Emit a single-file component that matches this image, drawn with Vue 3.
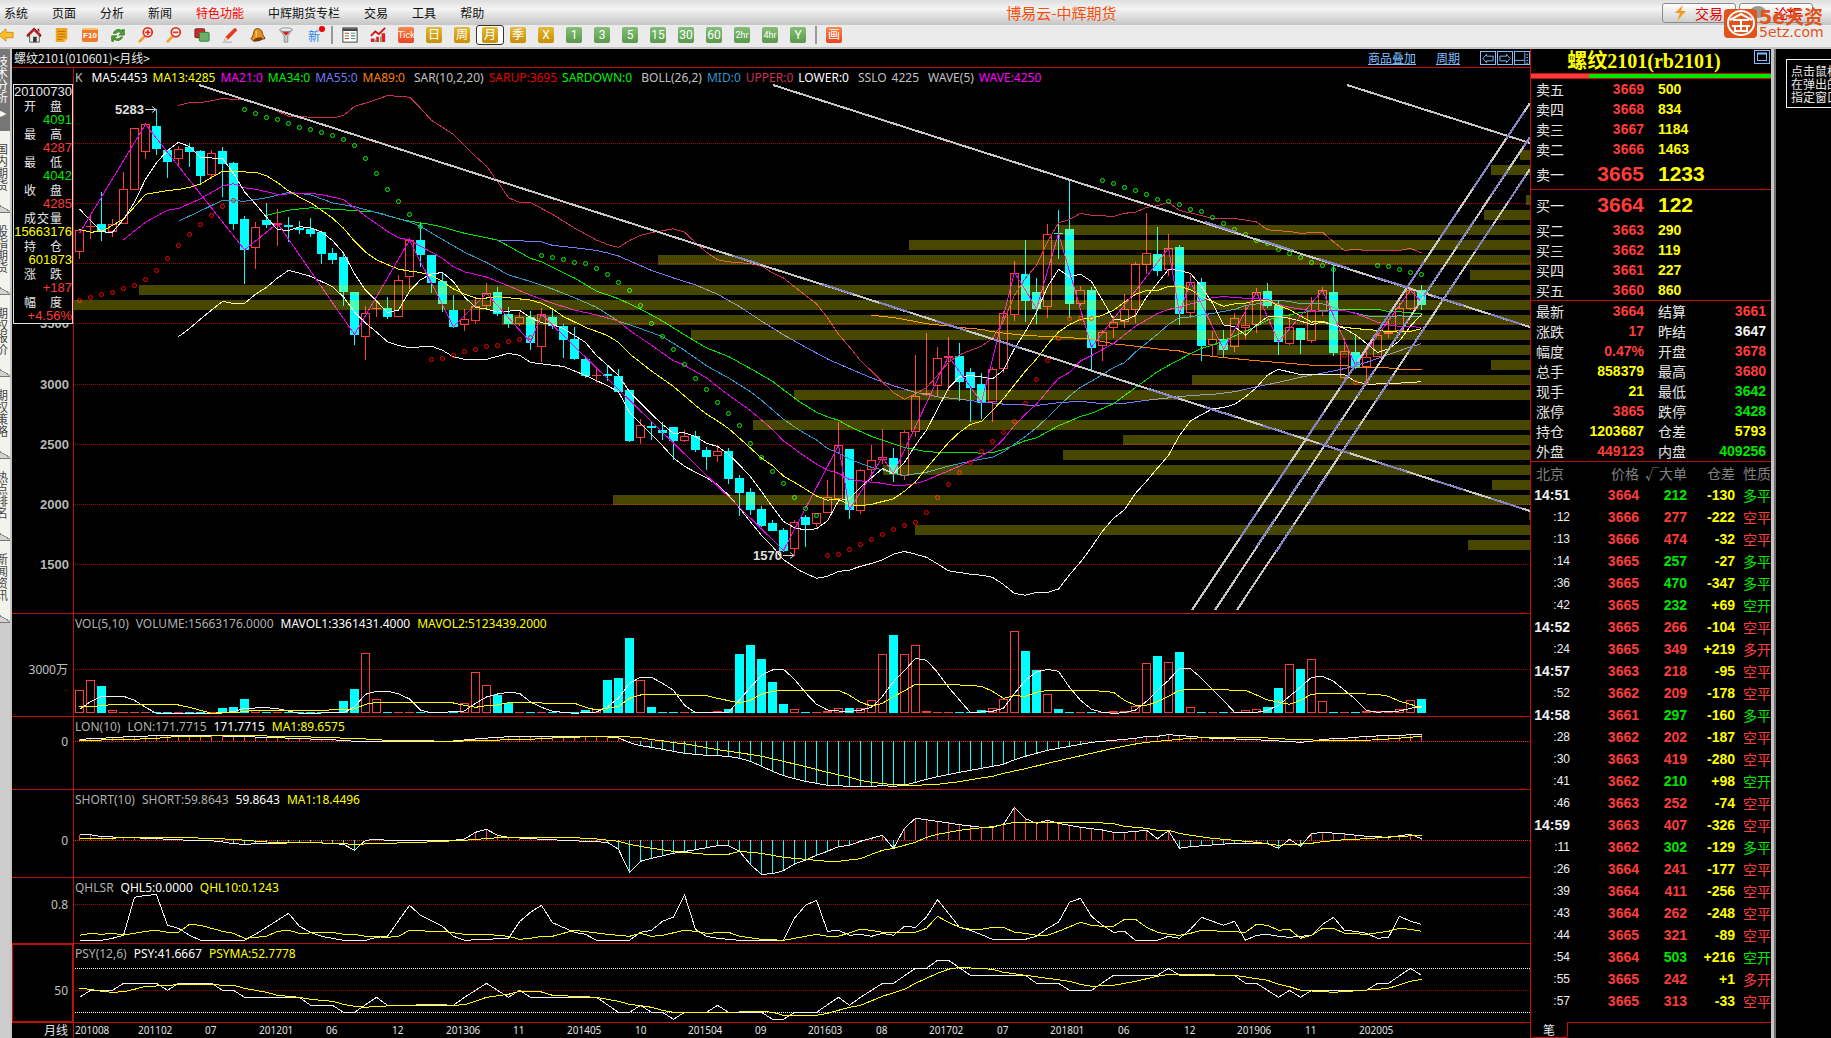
<script setup>
const menu = ['系统', '页面', '分析', '新闻', '特色功能', '中辉期货专栏', '交易', '工具', '帮助']

const periods = [
  { t: 'Tick', c: 'hot narrow' }, { t: '日', c: 'gold' }, { t: '周', c: 'gold' },
  { t: '月', c: 'gold', on: true }, { t: '季', c: 'gold' }, { t: 'X', c: 'gold' },
  { t: '1', c: 'leaf' }, { t: '3', c: 'leaf' }, { t: '5', c: 'leaf' }, { t: '15', c: 'leaf' },
  { t: '30', c: 'leaf' }, { t: '60', c: 'leaf' }, { t: '2hr', c: 'leaf narrow' },
  { t: '4hr', c: 'leaf narrow' }, { t: 'Y', c: 'leaf' }
]

const sideTabs = ['技术分析', '国内期货', '股指期货', '期权报价', '期权策略', '热点排名', '新闻资讯']

const detail = [
  ['开盘', '4091', 'g'], ['最高', '4287', 'r'], ['最低', '4042', 'g'], ['收盘', '4285', 'r'],
  ['成交量', '15663176', 'y'], ['持仓', '601873', 'y'], ['涨跌', '+187', 'r'], ['幅度', '+4.56%', 'r']
]

// ---- scales: one bar every 11 units, levels grow downward ----
const X = i => 79.5 + 11 * i
const yMain = v => Math.round((80 + v / 2.9037) * 10) / 10
const ySub = v => Math.round((600 + v / 3) * 10) / 10
const parse = s => s.trim().split(/\s+/).map(p => p.split(',').map(Number))
const path = (s, y) => parse(s).map(([i, v]) => `${X(i)},${y(v)}`).join(' ')

// kind, high, low, body top, body bottom
const candles = `u434,519,434,500 u390,461,425,427 d325,466,418,442 u404,456,419,442 u267,419,315,419 u140,320,140,320
u125,229,129,210 d84,218,134,199 d203,285,203,237 u192,248,201,230 d183,253,195,209 d203,299,206,279 u203,287,213,277
d195,340,206,243 d238,436,241,417 d395,592,404,493 u412,549,428,489 d357,430,407,420 u375,482,416,420 d397,470,422,427
d409,447,430,435 d401,456,433,446 d441,534,441,504 d488,534,502,522 d504,656,514,615 d616,769,616,739 u656,813,675,747
u645,688,662,664 d629,694,662,687 u567,689,582,689 u460,607,465,571 d416,543,465,508 d508,618,508,588 d560,673,584,650
d625,720,668,716 u665,729,695,710 u634,709,657,699 u588,662,619,655 d601,685,616,679 d659,720,679,709 u673,713,689,707
d670,784,688,764 u662,819,680,776 d668,723,688,713 d707,807,714,755 d716,813,752,810 d803,865,810,859 u838,880,857,859
d829,874,854,858 d839,908,859,906 d900,1051,900,1048 u984,1057,1003,1039 d993,1045,1005,1009 d993,1045,1016,1025
d1008,1103,1008,1048 u1016,1051,1034,1047 d1019,1080,1034,1074 d1066,1132,1074,1095 u1061,1109,1077,1091
d1069,1173,1077,1159 d1148,1266,1156,1199 d1186,1262,1196,1248 d1238,1298,1246,1295 d1278,1310,1286,1310
d1301,1371,1307,1368 u1278,1382,1284,1363 d1264,1356,1270,1292 u1258,1298,1258,1290 u1161,1258,1212,1258
u992,1216,1061,1216 d1071,1275,1071,1249 u1130,1260,1133,1250 u1060,1163,1102,1133 u1013,1115,1096,1102
d1069,1167,1098,1144 u1016,1161,1023,1149 u799,1037,916,1023 u735,916,910,914 u775,918,808,887 u746,903,802,808
d764,932,801,877 d836,993,848,893 d851,984,883,937 u833,993,840,936 u671,850,675,840 u526,699,559,681 d465,703,563,641
d575,709,616,665 u418,691,448,660 d377,520,444,448 d288,690,433,650 u598,656,611,649 d601,847,610,777 u726,816,733,773
u684,749,704,719 u621,719,666,704 u528,706,535,667 u386,563,503,536 d428,569,505,554 u447,569,489,553 d479,711,486,679
u565,690,585,677 d575,815,587,771 u730,803,753,768 d726,804,752,783 u677,790,692,776 u655,752,710,721 u604,735,616,712
d589,662,613,656 d642,799,654,761 u680,768,718,765 d720,796,720,755 u630,764,667,757 u602,686,611,671 d535,801,616,793
u750,870,788,864 d739,838,790,835 u772,880,805,832 u730,805,741,805 u694,749,733,738 u648,735,663,730 u601,668,611,664
d596,668,610,653`.trim().split(/\s+/).map((c, i) => {
  const [hi, lo, t, b] = c.slice(1).split(',').map(v => Math.round(yMain(Number(v))))
  return { up: c[0] === 'u', x: 79 + 11 * i, hi, lo, t, h: Math.max(b - t, 1) }
})

const lines = [
  ['#ff8000', '72,683 74,690 76,701 77,708 79,714 80,718 81,722 82,724 83,731 84,735 86,742 89,746 92,753 94,766 96,773 98,781 100,787 101,795 104,806 107,815 110,823 112,828 115,829 116,833 119,836 120,840 122,840'],
  ['#7878f0', '38,465 40,467 42,470 43,480 45,487 47,495 48,502 49,511 50,525 52,553 54,575 56,595 58,622 60,658 62,700 64,740 65.5,767 68,810 70,838 72,865 74,888 76,907 78,920 80,927 82,935 84,941 87,945 89,937 91,933 93,940 95,939 97,930 99,923 101,916 103,913 105,905 107,891 109,878 111,863 113,851 115,838 117,820 119,797 121,775 122,765'],
  ['#00e600', '17,393 19,378 21,371 24,377 27,384 29,403 30,410 32,420 33,427 35,445 37,458 38,465 40,500 41,518 42,528 44,560 45,575 47,613 49,635 51,665 53,700 55,740 57,778 59,803 61,838 63,875 64,900 65.5,935 67,965 68,978 69,988 70,1006 72,1035 75,1067 77,1079 78,1081 81,1081 82,1084 83,1082 84,1073 86,1047 87,1039 89,1004 91,977 92,968 94,940 96,893 98,847 99,829 101,795 102,779 103,770 104,757 106,730 107,715 108,697 109,688 110,682 111,675 113,670 115,667 118,666 119,672 120,673 122,679'],
  ['#2f96cf', '9,410 11,380 13,349 15,352 17,342 19,326 21,333 23,357 25,368 27,385 29,403 30,412 31,425 33,463 35,500 37,530 39,566 41,585 43,607 45,632 47,660 49,700 51,722 53,745 55,785 57,830 59,865 61,905 62,930 64,985 65.5,1018 67,1045 68,1070 69,1083 70,1101 71,1113 72,1125 73,1132 74,1142 75,1148 77,1139 79,1121 81,1107 83,1095 84,1080 85,1057 86,1035 87,1010 88,980 89,948 90,918 91,892 92,875 93,855 94,835 95,821 96,790 98,738 99,710 100,690 101,688 102,682 103,678 104,672 105,666 106,655 107,650 108,643 109,640 110,643 111,650 113,650 114,661 115,670 116,677 117,685 118,688 120,685 122,688'],
  ['#e600e6', '4,464 6,413 8,378 9,373 11,345 13,308 14,301 15,313 16,317 18,332 21,329 22,333 24,347 26,395 28,440 29,458 30,465 31,483 32,500 33,518 34,542 35,557 37,572 39,598 41,625 43,648 45,668 47,682 49,700 50,727 52,770 54,815 55,828 57,865 59,915 61,960 63,1015 64,1048 65.5,1083 67,1115 68,1133 69,1142 70,1160 72,1168 73,1171 74,1177 75,1177 76,1172 77,1162 78,1148 79,1135 80,1121 81,1107 82,1092 83,1073 84,1043 85,1003 86,970 87,941 88,903 89,867 90,849 91,816 92,800 94,765 96,715 98,678 99,666 100,660 101,650 102,641 103,632 104,629 106,634 108,637 109,652 110,660 111,665 112,672 113,671 115,670 116,678 117,690 118,703 119,712 120,715 122,718'],
  ['#ffff00', '0,434 1,442 2,440 4,404 6,332 8,321 9,318 10,312 11,302 12,283 13,265 16,268 17,278 18,298 19,322 20,340 21,356 22,378 23,401 24,430 25,468 26,500 27,522 28,536 29,549 30,555 31,559 32,568 33,585 34,607 35,622 36,633 37,633 38,629 39,632 41,639 42,648 43,665 44,687 46,718 48,742 49,762 50,795 52,845 54,890 56,945 57,970 58,990 59,1012 60,1040 62,1098 63,1120 64,1150 65.5,1178 67,1208 68,1220 69,1217 70,1234 71,1236 72,1232 73,1224 74,1216 75,1194 76,1167 77,1127 78,1090 79,1053 80,1023 81,1000 82,991 83,960 84,925 85,885 86,845 87,810 88,768 89,732 90,710 91,695 92,692 93,683 94,669 95,645 96,622 97,611 98,611 99,600 100,599 101,609 102,628 103,643 104,657 105,650 106,648 107,640 108,640 109,655 110,667 111,685 112,703 113,700 114,711 115,718 116,722 118,727 119,731 120,732 121,730 122,722'],
  ['#cc2f50', '9,74 10,66 11,66 13,54 15,58 17,76 19,105 20,106 22,110 23,110 24,103 25,77 26,67 27,57 28,45 30,50 31,82 32,117 34,158 36,222 37,250 38,295 39,342 40,355 41,356 43,390 45,430 47,465 48,478 49,486 50,466 51,451 52,443 54,432 55,442 56,472 57,500 58,522 59,528 61,533 62,540 63,560 64,575 65.5,613 67,650 68,690 69,738 70,775 71,815 72,845 74,908 75,927 76,912 77,893 78,858 79,820 80,798 81,785 82,773 83,750 84,700 85,625 86,575 87,538 88,470 89,415 90,405 91,387 92,393 94,396 95,387 96,384 97,370 98,365 99,355 100,379 101,386 103,402 105,402 107,412 108,435 110,440 111,445 113,442 114,470 115,495 116,492 117,495 120,495 121,489 122,502'],
  ['#f0f0f0', '9,745 10,722 11,694 12,668 13,643 14,649 15,649 16,622 17,602 18,575 19,553 20,561 21,570 22,585 23,600 24,630 25,673 26,706 27,732 28,760 29,771 30,777 32,773 33,785 34,804 35,811 37,811 39,794 40,799 41,820 42,824 44,832 46,858 48,888 49,905 50,965 51,998 52,1030 53,1062 54,1097 55,1122 57,1155 58,1175 59,1205 60,1243 61,1283 62,1322 63,1355 64,1393 65.5,1425 67,1447 68,1441 69,1427 70,1423 71,1412 72,1404 73,1393 74,1377 75,1369 76,1377 77,1386 78,1405 79,1425 80,1430 81,1435 82,1438 83,1444 84,1465 85,1491 86,1496 87,1488 88,1488 89,1478 90,1437 91,1400 92,1357 93,1310 94,1273 95,1248 96,1200 97,1165 98,1127 99,1090 100,1032 101,990 102,972 103,955 104,951 105,942 106,920 107,893 108,857 109,840 110,848 111,855 114,856 115,856 116,875 117,884 120,880 122,876'],
  ['#f8f8f8', '0,375 2,441 3,442 4,405 5,355 6,288 7,240 8,205 9,181 10,193 11,225 13,228 14,270 15,325 16,360 17,398 18,434 19,437 20,426 21,429 22,441 23,466 24,502 25,563 26,610 27,642 28,675 29,668 30,613 31,580 32,563 33,559 34,586 35,630 36,660 37,665 38,674 39,671 40,669 41,690 42,705 43,710 44,722 45,742 46,762 47,800 48,828 49,858 50,905 51,938 52,970 53,1000 54,1026 55,1024 56,1035 57,1055 58,1064 59,1087 60,1118 61,1152 62,1195 63,1240 64,1282 65,1300 66,1307 67,1303 68,1280 69,1222 70,1215 71,1183 72,1155 73,1128 74,1143 75,1110 76,1060 77,1017 78,955 79,895 80,862 81,858 82,862 83,868 84,842 85,780 86,730 87,675 88,600 89,550 90,571 91,564 92,585 93,640 94,694 95,698 96,684 97,630 98,590 99,550 100,553 101,562 102,600 103,648 104,711 105,716 106,741 107,711 108,688 109,686 110,692 111,700 112,710 113,703 114,711 115,722 116,740 117,765 118,791 119,781 120,757 121,715 122,680'],
  ['#f000f0', '0,445 6,129 15,493 18,416 25,739 30,465 34,716 37,619 41,762 42,680 64,1366 69,1061 70,1247 73,1096 74,1142 79,802 82,936 85,558 87,664 89,446 92,776 99,489 100,678 101,585 104,782 107,616 109,760 113,611 116,830 121,611 122,645']
].map(([c, s]) => ({ c, p: path(s, yMain) }))

const sar = [
  [0, 'red', [640, 631, 622, 614, 605, 596, 579, 553, 516, 480, 448, 419, 393, 367, 347]],
  [15, 'lime', [85, 97, 106, 114, 126, 135, 143, 152, 161, 170, 190, 225, 271, 315, 352, 390, 425]],
  [32, 'red', [811, 806, 797, 788, 782, 773, 768, 759, 753, 747]],
  [42, 'lime', [509, 515, 521, 527, 532, 547, 564, 585, 611, 654, 705, 744, 782, 825, 866, 898, 936, 968, 1003, 1055, 1096, 1136, 1171, 1212, 1244, 1264]],
  [68, 'red', [1380, 1377, 1363, 1348, 1334, 1319, 1305, 1293, 1282, 1253, 1212, 1174, 1139, 1108, 1076, 1049, 1023, 991, 937, 869, 814, 750, 690, 690, 690]],
  [93, 'lime', [289, 300, 312, 320, 332, 344, 352, 361, 373, 381, 399, 416, 432, 448, 463, 474, 490, 503, 515, 527, 538, 550]],
  [115, 'red', [799, 876, 877]],
  [118, 'lime', [538, 541, 550, 556, 562]]
].flatMap(([s, c, a]) => a.map((v, k) => ({ c, x: X(s + k), y: Math.round(yMain(v)) + 0.5 })))

// volume profile: left edge of each 15-unit step, 0 when empty
const profile = [1520, 1491, 0, 1526, 1484, 1058, 909, 658, 1470, 139, 74, 502, 691, 1217, 1491, 1192, 794, 0, 753, 1123, 1063, 883, 1492, 613, 1529, 915, 1468]
  .map((x, k) => ({ x, y: 150 + 15 * k })).filter(b => b.x)

const trends = [[199, 85, 1530, 511], [773, 85, 1530, 327], [1347, 85, 1530, 143], [1192, 610, 1530, 103], [1215, 610, 1530, 137], [1237, 610, 1530, 169]]
const tints = [[733, 256, 760, 264], [822, 284, 1020, 348], [1148, 389, 1530, 511], [1205, 222, 1530, 327], [1240, 538, 1530, 103], [1257, 546, 1530, 137], [1276, 552, 1530, 169]]
const grid = [143, 203, 263, 323, 384, 444, 504, 564]
const priceMarks = [[323, 3500], [384, 3000], [444, 2500], [504, 2000], [564, 1500]]

const volTops = [271, 239, 258, 331, 336, 336, 336, 336, 336, 336, 336, 336, 336, 324, 321, 297, 331, 336, 336, 336, 336, 336, 336, 336, 303, 267, 160, 298, 336, 336, 336, 336, 336, 336, 336, 310, 217, 256, 285, 309, 336, 336, 336, 336, 336, 336, 330, 328, 240, 234, 114, 241, 321, 336, 336, 336, 336, 336, 334, 327, 162, 135, 177, 246, 312, 328, 336, 336, 334, 325, 324, 325, 301, 163, 105, 163, 136, 334, 336, 336, 336, 336, 330, 325, 298, 94, 153, 209, 283, 327, 336, 336, 336, 336, 334, 334, 318, 190, 168, 187, 156, 322, 336, 336, 336, 336, 331, 328, 321, 264, 193, 207, 178, 304, 336, 336, 336, 334, 334, 334, 328, 301, 297]
const volBars = volTops.map((v, i) => {
  const t = Math.round(ySub(v))
  return { up: candles[i].up, x: 75 + 11 * i, t, h: 713 - t }
})

const S = {
  vol1: '0,328 1,305 2,289 4,289 5,301 6,322 7,340 12,340 14,335 15,325 17,323 18,326 20,340 24,338 25,320 26,283 27,274 28,274 29,281 30,297 31,330 32,339 35,333 36,310 37,291 38,282 39,277 40,280 41,306 42,322 43,334 45,340 47,336 48,320 49,295 50,250 51,232 52,232 53,250 54,271 55,316 56,338 59,337 60,300 61,262 62,226 63,210 64,208 65,238 66,278 67,313 68,330 69,333 70,334 71,331 72,322 73,289 74,245 75,212 76,175 77,181 78,217 79,262 80,300 81,338 83,334 84,325 85,280 86,241 87,216 88,208 89,214 90,262 91,301 92,328 93,337 94,340 95,338 96,330 97,304 98,271 99,241 100,205 101,206 102,235 103,268 104,301 105,337 107,337 108,331 109,316 110,289 111,262 112,232 113,229 114,244 115,271 116,298 117,331 118,337 119,334 120,333 121,325 122,319',
  vol2: '0,319 1,321 2,316 4,313 8,313 9,315 10,322 11,331 12,340 14,338 16,331 22,331 25,327 26,313 27,307 34,309 35,316 36,322 37,317 38,315 39,308 45,310 46,322 47,330 49,319 50,295 51,285 52,283 57,287 58,295 60,309 61,300 62,283 63,274 64,271 69,271 70,286 71,307 72,318 73,310 74,290 75,272 76,253 79,253 82,259 83,274 84,295 85,287 86,289 87,277 88,271 92,271 94,277 95,301 96,316 97,316 98,305 99,289 100,271 101,268 103,269 106,271 107,285 108,300 109,306 110,313 111,301 112,283 113,280 117,282 118,283 119,289 120,304 121,313 122,325',
  lon: '0,418 2,415 5,409 9,406 13,408 18,413 21,417 24,421 25,424 28,424 34,423 36,417 38,412 40,409 47,409 49,413 50,428 51,437 52,442 53,448 55,460 57,466 59,469 60,475 61,484 62,499 63,514 64,527 65,536 66,544 67,550 68,556 70,559 72,559 73,557 74,559 75,556 76,547 77,538 78,530 80,517 82,505 84,493 85,479 86,469 88,451 90,439 92,427 94,421 96,415 97,409 98,409 99,404 101,409 103,415 106,418 108,421 111,427 112,424 113,418 115,415 117,409 120,406 122,403',
  lonMa: '0,421 4,419 7,415 9,409 15,407 19,409 23,413 26,417 28,421 34,424 37,421 41,418 44,412 49,409 51,413 52,419 53,422 54,428 55,431 56,437 58,449 60,458 62,469 64,484 66,500 68,517 70,532 71,541 72,547 74,554 76,556 78,553 80,545 81,539 83,529 84,520 86,506 88,490 90,475 92,460 94,445 96,432 97,427 99,421 101,415 103,412 107,412 110,418 113,421 117,421 119,417 122,409',
  short: '0,704 1,704 2,710 4,712 7,716 10,721 12,722 13,726 14,731 15,733 17,730 19,729 21,727 24,733 25,751 26,721 27,718 28,721 34,721 35,717 36,697 37,688 38,706 39,712 42,718 46,724 48,727 49,748 50,817 51,784 52,775 54,760 56,749 58,737 59,737 60,754 61,794 62,823 63,821 64,812 65,792 66,780 67,766 68,754 69,740 70,736 71,724 72,715 73,706 74,745 75,685 76,655 78,664 80,674 82,682 83,682 84,673 85,622 86,656 87,670 88,661 89,670 91,682 93,690 94,697 95,697 97,691 98,716 99,692 100,745 101,740 103,735 105,730 108,731 109,745 110,718 111,739 112,701 113,697 115,702 117,709 119,712 121,703 122,716',
  shortMa: '0,715 3,715 4,712 10,713 14,718 17,726 20,727 23,730 25,733 28,730 31,727 35,721 38,713 45,713 47,717 49,724 50,733 52,745 54,754 57,763 59,763 60,754 62,760 64,772 66,778 68,784 69,784 71,776 72,763 73,751 74,745 76,727 77,712 78,703 80,691 82,683 83,680 85,667 92,667 94,671 95,679 97,685 98,691 99,691 100,700 101,706 103,715 105,721 107,727 109,736 112,730 113,725 115,719 117,716 119,711 122,706',
  qhl5: '0,1021 2,1021 3,1015 4,1006 5,892 6,886 7,884 8,976 9,985 10,1006 11,1021 15,1021 16,1003 17,982 19,940 20,979 21,997 22,1009 24,1021 26,1021 27,1012 28,1009 30,916 31,946 33,979 34,1009 35,1021 39,1015 40,965 41,937 42,916 43,968 45,997 46,1003 47,1021 50,1021 51,997 52,991 53,964 54,951 55,884 56,988 57,1009 58,1015 60,1021 64,1021 65,955 66,916 67,901 68,994 69,991 70,1006 71,1003 72,1009 73,1000 74,1006 75,979 76,982 77,951 78,899 79,940 80,982 81,991 82,1004 83,1018 86,1018 87,1009 88,985 89,967 90,907 91,895 92,949 93,976 94,997 95,994 96,1021 98,1021 99,1009 100,1015 101,988 102,952 103,964 104,976 105,964 106,1021 107,1006 108,1003 109,1009 110,1012 112,1006 113,973 114,952 115,991 116,994 117,1000 118,1015 119,1012 120,949 121,964 122,973',
  qhl10: '0,1006 1,1000 2,1003 3,1000 4,1005 5,1000 6,994 7,991 8,997 9,997 10,973 11,976 12,985 13,994 14,1000 15,1015 16,1012 17,1009 18,994 19,991 20,1000 23,997 24,1003 25,1003 26,1009 28,1012 29,1009 30,991 32,994 33,994 35,1003 37,1003 39,1009 40,1018 41,1015 42,1009 43,1009 45,991 48,1003 50,1009 51,1000 52,1009 53,1006 55,991 56,994 57,1000 59,997 60,1009 62,1018 64,1021 65,1015 67,1003 68,1009 69,1009 71,988 72,991 73,997 76,997 77,985 78,949 79,967 80,982 81,988 82,988 83,982 84,982 85,997 86,1000 87,1006 88,1006 89,994 91,967 92,976 93,979 94,979 95,958 96,958 97,982 98,997 99,1003 100,1006 101,1000 102,991 106,997 107,973 108,976 109,991 110,988 111,1015 112,1006 113,985 114,985 115,1000 117,1003 119,994 120,985 121,988 122,994',
  psy: '0,1192 1,1171 3,1171 4,1150 7,1150 8,1171 9,1150 12,1150 13,1171 14,1171 15,1192 20,1192 21,1216 23,1216 24,1237 25,1237 27,1192 28,1216 34,1216 35,1192 37,1150 39,1192 40,1171 41,1192 47,1192 49,1237 50,1237 51,1216 52,1237 53,1237 54,1258 55,1237 57,1237 58,1216 59,1237 62,1237 63,1258 64,1258 65,1237 67,1237 69,1192 70,1216 71,1192 73,1150 74,1150 76,1105 77,1105 78,1081 79,1081 81,1126 86,1126 87,1150 89,1150 90,1171 92,1171 94,1126 98,1126 99,1105 100,1126 105,1126 106,1150 107,1150 109,1192 110,1171 111,1192 112,1171 117,1171 118,1150 119,1150 121,1105 122,1126',
  psyMa: '0,1165 1,1168 2,1174 3,1177 4,1175 5,1168 6,1159 8,1157 9,1153 12,1153 13,1156 14,1156 15,1165 17,1177 18,1186 20,1192 21,1198 23,1204 24,1213 25,1219 26,1222 27,1219 30,1216 32,1213 34,1216 35,1214 36,1204 37,1192 39,1183 40,1174 42,1176 43,1186 47,1192 49,1204 50,1213 51,1217 52,1222 53,1231 54,1237 60,1236 62,1234 63,1237 64,1246 67,1246 68,1240 69,1231 70,1222 71,1216 73,1189 75,1168 76,1150 78,1120 79,1108 80,1102 83,1108 84,1117 86,1126 88,1135 90,1144 91,1153 92,1159 94,1156 96,1144 98,1129 99,1123 105,1126 108,1141 109,1153 110,1160 111,1171 114,1177 118,1168 119,1165 121,1144 122,1138'
}

function stems(s, zero) {
  const p = parse(s)
  return Array.from({ length: 123 }, (_, i) => {
    const k = Math.max(1, p.findIndex(q => q[0] >= i))
    const [a, b] = [p[k - 1], p[k]]
    const v = a[1] + (b[1] - a[1]) * (i - a[0]) / (b[0] - a[0])
    return { x: X(i), y: ySub(v), c: v < zero ? '#ff3c3c' : '#00ffff' }
  })
}

const mainLegend = [['K', '#c0c0c0', 1], ['MA5:4453', '#fff'], ['MA13:4285', '#ff0'], ['MA21:0', '#f0f'], ['MA34:0', '#00f000'], ['MA55:0', '#7878f0'], ['MA89:0', '#ff8000', 1], ['SAR(10,2,20)', '#c0c0c0'], ['SARUP:3695', '#e60000'], ['SARDOWN:0', '#00f000', 1], ['BOLL(26,2)', '#c0c0c0'], ['MID:0', '#2f96cf'], ['UPPER:0', '#cc2f50'], ['LOWER:0', '#fff', 1], ['SSLO', '#c0c0c0'], ['4225', '#c0c0c0', 1], ['WAVE(5)', '#c0c0c0'], ['WAVE:4250', '#f0f']]

const panels = [
  { id: 'vol', top: 614, h: 102, marks: [[669, '3000万']], grid: 669, legend: [['VOL(5,10)', '#b0b0b0'], ['VOLUME:15663176.0000', '#b0b0b0'], ['MAVOL1:3361431.4000', '#fff'], ['MAVOL2:5123439.2000', '#ff0']], white: path(S.vol1, ySub), yellow: path(S.vol2, ySub), bars: volBars },
  { id: 'lon', top: 717, h: 72, marks: [[741, '0']], grid: 741, bright: true, legend: [['LON(10)', '#b0b0b0'], ['LON:171.7715', '#b0b0b0'], ['171.7715', '#fff'], ['MA1:89.6575', '#ff0']], white: path(S.lon, ySub), yellow: path(S.lonMa, ySub), stems: stems(S.lon, 424) },
  { id: 'short', top: 790, h: 87, marks: [[840, '0']], grid: 840, bright: true, legend: [['SHORT(10)', '#b0b0b0'], ['SHORT:59.8643', '#b0b0b0'], ['59.8643', '#fff'], ['MA1:18.4496', '#ff0']], white: path(S.short, ySub), yellow: path(S.shortMa, ySub), stems: stems(S.short, 721) },
  { id: 'qhl', top: 878, h: 65, marks: [[904, '0.8']], grid: 904, legend: [['QHLSR', '#b0b0b0'], ['QHL5:0.0000', '#fff'], ['QHL10:0.1243', '#ff0']], white: path(S.qhl5, ySub), yellow: path(S.qhl10, ySub) },
  { id: 'psy', top: 944, h: 78, marks: [[990, '50']], grid: 990, rails: [968, 1012], legend: [['PSY(12,6)', '#b0b0b0'], ['PSY:41.6667', '#fff'], ['PSYMA:52.7778', '#ff0']], white: path(S.psy, ySub), yellow: path(S.psyMa, ySub), chosen: true }
]

const dates = [[75, '201008'], [138, '201102'], [205, '07'], [259, '201201'], [326, '06'], [392, '12'], [446, '201306'], [513, '11'], [567, '201405'], [635, '10'], [688, '201504'], [755, '09'], [808, '201603'], [876, '08'], [929, '201702'], [997, '07'], [1050, '201801'], [1118, '06'], [1184, '12'], [1237, '201906'], [1305, '11'], [1359, '202005']]

const asks = [['卖五', 3669, 500], ['卖四', 3668, 834], ['卖三', 3667, 1184], ['卖二', 3666, 1463], ['卖一', 3665, 1233]]
const bids = [['买一', 3664, 122], ['买二', 3663, 290], ['买三', 3662, 119], ['买四', 3661, 227], ['买五', 3660, 860]]
const quotes = [
  ['最新', '3664', 'r', '结算', '3661', 'r'], ['涨跌', '17', 'r', '昨结', '3647', 'w'],
  ['幅度', '0.47%', 'r', '开盘', '3678', 'r'], ['总手', '858379', 'y', '最高', '3680', 'r'],
  ['现手', '21', 'y', '最低', '3642', 'g'], ['涨停', '3865', 'r', '跌停', '3428', 'g'],
  ['持仓', '1203687', 'y', '仓差', '5793', 'y'], ['外盘', '449123', 'r', '内盘', '409256', 'g']
]
const ticks = `14:51 3664 212 -130 多平 g|:12 3666 277 -222 空平 r|:13 3666 474 -32 空平 r|:14 3665 257 -27 多平 g|:36 3665 470 -347 多平 g|:42 3665 232 +69 空开 g|14:52 3665 266 -104 空平 r|:24 3665 349 +219 多开 r|14:57 3663 218 -95 空平 r|:52 3662 209 -178 空平 r|14:58 3661 297 -160 多平 g|:28 3662 202 -187 空平 r|:30 3663 419 -280 空平 r|:41 3662 210 +98 空开 g|:46 3663 252 -74 空平 r|14:59 3663 407 -326 空平 r|:11 3662 302 -129 多平 g|:26 3664 241 -177 空平 r|:39 3664 411 -256 空平 r|:43 3664 262 -248 空平 r|:44 3665 321 -89 空平 r|:54 3664 503 +216 空开 g|:55 3665 242 +1 多开 r|:57 3665 313 -33 空平 r`
  .split('|').map(r => r.split(' '))
</script>

<template>
  <div class="app">
    <header class="menubar">
      <nav class="menu">
        <button v-for="m in menu" :key="m" type="button" :class="{ hotitem: m === '特色功能' }">{{ m }}</button>
      </nav>
      <h1>博易云-中辉期货</h1>
      <div class="corner">
        <button type="button"><svg width="12" height="16" viewBox="0 0 12 16"><path d="M8 0 0 8h5l-3 8 9-10H6z" fill="#f59a1c" /></svg><span>交易</span></button>
        <button type="button"><svg width="16" height="14" viewBox="0 0 16 14"><ellipse cx="8" cy="6" rx="8" ry="6" fill="#999" /><path d="m4 9-1 5 5-3z" fill="#999" /></svg><span>论坛</span></button>
      </div>
      <div class="brand">
        <svg width="33" height="29" viewBox="0 0 33 29"><rect width="33" height="29" rx="4" fill="#e0541c" /><ellipse cx="17" cy="14" rx="13" ry="12" fill="none" stroke="#fff" stroke-width="2" /><path d="M6 11 17 5l11 6M9 11h16M8 17h18M17 11v12M11 17v5h12v-5" fill="none" stroke="#fff" stroke-width="2" /></svg>
        <p><b>5e天资</b><span>5etz.com</span></p>
      </div>
    </header>

    <div class="toolbar">
      <button type="button" aria-label="后退"><svg viewBox="0 0 18 18"><path d="M1 9 9 2v4h8v6H9v4z" fill="#fbbf2c" stroke="#d08a10" /></svg></button>
      <button type="button" aria-label="主页"><svg viewBox="0 0 18 18"><path d="M4 8v9h11V8L9 3z" fill="#e8e8e8" stroke="#555" /><path d="M1 9 9 1l8 8-1 2-7-7-7 7z" fill="#d92027" stroke="#7a1010" /><path d="M8 11h4v6H8z" fill="#333" /><path d="M13 2h2v4l-2-2z" fill="#a11" /></svg></button>
      <button type="button" aria-label="记事"><svg viewBox="0 0 18 18"><path d="M2 1h13v13l-3 3H2z" fill="#f3a51f" /><path d="M4 5h9M4 8h9M4 11h9M4 14h5" stroke="#b06c00" /><path d="M15 14h-3v3z" fill="#ffe0a0" /></svg></button>
      <button type="button" aria-label="F10"><span class="f10">F10</span></button>
      <button type="button" aria-label="刷新"><svg viewBox="0 0 18 18"><path d="M4 7c1-5 8-5 10-2V3h2v6h-6l3-2c-2-2-5-2-6 0zM14 11c-1 5-8 5-10 2v3H2v-6h6l-3 2c2 2 5 2 6 0z" fill="#58a535" stroke="#2f7417" /></svg></button>
      <button type="button" aria-label="放大"><svg viewBox="0 0 18 18"><path d="M8 10 2 16" stroke="#f0a030" stroke-width="3" stroke-linecap="round" /><circle cx="11" cy="6" r="5" fill="#fff" stroke="#e53020" stroke-width="2" /><path d="M8 6h6M11 3v6" stroke="#e53020" stroke-width="2" /></svg></button>
      <button type="button" aria-label="缩小"><svg viewBox="0 0 18 18"><path d="M8 10 2 16" stroke="#f0a030" stroke-width="3" stroke-linecap="round" /><circle cx="11" cy="6" r="5" fill="#fff" stroke="#e53020" stroke-width="2" /><path d="M8 6h6" stroke="#e53020" stroke-width="2" /></svg></button>
      <button type="button" aria-label="叠加"><svg viewBox="0 0 18 18"><rect x="1" y="2" width="11" height="10" rx="1" fill="#cb2a2a" stroke="#8a1515" /><rect x="6" y="6" width="11" height="10" rx="1" fill="#68b06a" stroke="#2f7a3a" /></svg></button>
      <button type="button" aria-label="画线"><svg viewBox="0 0 18 18"><path d="M14 1c2 0 3 2 3 3L7 14l-5 2 2-5z" fill="#e23b22" /><path d="m4 11 3 3-5 2z" fill="#f7d7a0" /><path d="M1 17h10" stroke="#999" /></svg></button>
      <button type="button" aria-label="预警"><svg viewBox="0 0 18 18"><path d="M7 2c5-1 7 3 7 6l3 5-13 3-3-3c4-3 2-10 6-11z" fill="#e5931c" stroke="#6b3205" /><ellipse cx="9" cy="14" rx="5" ry="2" fill="#7b3a08" transform="rotate(-14 9 14)" /><path d="M7 4v7" stroke="#ffe190" /></svg></button>
      <button type="button" aria-label="筛选"><svg viewBox="0 0 18 18"><path d="M2 3h14l-5 7v7H7v-7z" fill="#c9c9c9" stroke="#888" /><path d="M4 4h10l-4 5H8z" fill="#e02020" /><ellipse cx="9" cy="3" rx="7" ry="2" fill="#eee" stroke="#888" /></svg></button>
      <button type="button" class="new">新<i></i></button>
      <span class="sep"></span>
      <button type="button" aria-label="报价"><svg viewBox="0 0 18 18"><rect x="1" y="1" width="16" height="16" fill="#fff" stroke="#333" /><path d="M1 3h16" stroke="#444" stroke-width="3" /><path d="M3 7h5M3 13h5" stroke="#c22" /><path d="M10 7h5M10 13h5M3 10h5" stroke="#292" /><path d="M10 10h5" stroke="#22c" /></svg></button>
      <button type="button" aria-label="走势"><svg viewBox="0 0 18 18"><path d="M1 17v-4h4v4zM7 17v-6h3v6zM13 17V7h4v10z" fill="#e02020" /><path d="m1 10 5-5 4 3 7-7" fill="none" stroke="#d01010" stroke-width="2" /><path d="M6 17v-3M12 17v-6" stroke="#2c9b2c" /></svg></button>
      <button v-for="p in periods" :key="p.t" type="button" :class="{ on: p.on }"><span class="tile" :class="p.c">{{ p.t }}</span></button>
      <span class="sep"></span>
      <button type="button"><span class="tile hot">画</span></button>
    </div>

    <div class="body">
      <aside class="side">
        <button v-for="(t, i) in sideTabs" :key="t" type="button" :class="{ cur: i === 0 }"><span>{{ t }}</span><i v-if="i === 0">▶</i></button>
      </aside>

      <main class="center">
        <div class="caption">
          <span class="name">螺纹2101(010601)&lt;月线&gt;</span>
          <a href="#">商品叠加</a>
          <a href="#">周期</a>
          <div class="boxes">
            <button type="button" aria-label="左移"><svg width="15" height="13" viewBox="0 0 15 13"><path d="M2 6.500 6 2v2h7v5H6v2z" fill="none" stroke="#7fbfff" /></svg></button>
            <button type="button" aria-label="右移"><svg width="15" height="13" viewBox="0 0 15 13"><path d="M13 6.500 9 2v2H2v5h7v2z" fill="none" stroke="#7fbfff" /></svg></button>
            <button type="button" aria-label="布局"><svg width="15" height="13" viewBox="0 0 15 13"><path d="M0 8.500h10M10.500 0v13M12 2.500h2M12 5.500h2M12 8.500h2M12 11.500h2" fill="none" stroke="#7fbfff" /></svg></button>
          </div>
        </div>

        <section class="panel">
          <svg viewBox="12 68 1518 545">
            <g class="crisp">
              <path v-for="y in grid" :key="y" :d="`M75 ${y}.5H1530`" class="dots" />
            </g>
            <text v-for="m in priceMarks" :key="m[1]" x="69" :y="m[0] + 5" text-anchor="end" class="price">{{ m[1] }}</text>
            <g class="crisp">
              <template v-for="c in candles" :key="c.x">
                <template v-if="c.up">
                  <path :d="`M${c.x}.5 ${c.hi}V${c.t}M${c.x}.5 ${c.t + c.h}V${c.lo}`" stroke="#ff3c3c" />
                  <rect :x="c.x - 3.5" :y="c.t + 0.5" width="8" :height="Math.max(c.h - 1, 0.1)" fill="none" stroke="#ff3c3c" />
                </template>
                <template v-else>
                  <path :d="`M${c.x}.5 ${c.hi}V${c.lo}`" stroke="#0ff" />
                  <rect :x="c.x - 4" :y="c.t" width="9" :height="c.h" fill="#0ff" />
                </template>
              </template>
              <polyline v-for="(l, i) in lines" :key="i" :points="l.p" fill="none" :stroke="l.c" />
            </g>
            <circle v-for="(s, i) in sar" :key="i" :cx="s.x" :cy="s.y" r="2" fill="none" :stroke="s.c" />
            <rect v-for="b in profile" :key="b.y" :x="b.x" :y="b.y" :width="1530 - b.x" height="10" fill="rgba(255,255,0,.28)" />
            <g class="crisp">
              <path v-for="(t, i) in trends" :key="i" :d="`M${t[0]} ${t[1]}L${t[2]} ${t[3]}`" stroke="#c8c8c8" stroke-width="2" />
              <path v-for="(t, i) in tints" :key="i" :d="`M${t[0]} ${t[1]}L${t[2]} ${t[3]}`" stroke="#8484c4" stroke-width="2" stroke-dasharray="32 28" />
              <path d="M73.500 68V613" class="edge" />
            </g>
            <text x="115" y="114" class="price lit">5283</text>
            <path d="M145 109.500H156M152 106.500 156 109.500 152 112.500" fill="none" stroke="#d8d8d8" />
            <text x="753" y="560" class="price lit">1570</text>
            <path d="M783 555.500H794M790 552.500 794 555.500 790 558.500" fill="none" stroke="#d8d8d8" />
          </svg>
          <p class="legend"><span v-for="(l, i) in mainLegend" :key="i" :class="{ wide: l[2] }" :style="{ color: l[1] }">{{ l[0] }}</span></p>
          <dl class="detail">
            <dt class="date">20100730</dt>
            <template v-for="d in detail" :key="d[0]">
              <dt><span v-for="ch in d[0]" :key="ch">{{ ch }}</span></dt>
              <dd :class="d[2]">{{ d[1] }}</dd>
            </template>
          </dl>
        </section>

        <section v-for="p in panels" :key="p.id" class="panel sub">
          <svg :viewBox="`12 ${p.top} 1518 ${p.h}`">
            <g class="crisp">
              <path :d="`M75 ${p.grid}.5H1530`" class="dots" :class="{ bright: p.bright }" />
              <path v-for="r in p.rails" :key="r" :d="`M75 ${r}.5H1530`" stroke="#fff" stroke-dasharray="1 1" />
              <template v-for="b in p.bars" :key="b.x">
                <rect v-if="b.up" :x="b.x + 0.5" :y="b.t + 0.5" width="8" :height="Math.max(b.h - 1, 0.1)" fill="none" stroke="#ff3c3c" />
                <rect v-else :x="b.x" :y="b.t" width="9" :height="b.h" fill="#0ff" />
              </template>
              <path v-for="s in p.stems" :key="s.x" :d="`M${s.x} ${p.grid}V${s.y}`" :stroke="s.c" />
              <polyline :points="p.white" fill="none" stroke="#f0f0f0" />
              <polyline :points="p.yellow" fill="none" stroke="#ff0" />
              <path :d="`M73.500 ${p.top}v${p.h}`" class="edge" />
              <rect v-if="p.chosen" x="12.500" y="944.500" width="60" height="77" fill="none" class="edge" />
            </g>
            <text v-for="m in p.marks" :key="m[1]" x="68" :y="m[0] + 5" text-anchor="end" class="level">{{ m[1] }}</text>
          </svg>
          <p class="legend"><span v-for="(l, i) in p.legend" :key="i" :style="{ color: l[1] }">{{ l[0] }}</span></p>
        </section>

        <div class="dates">
          <svg viewBox="12 1023 1518 15">
            <text x="68" y="1035" text-anchor="end" class="unit">月线</text>
            <text v-for="d in dates" :key="d[0]" :x="d[0]" y="1034" class="date">{{ d[1] }}</text>
            <path d="M73.500 1023v15" class="edge" />
          </svg>
        </div>
      </main>

      <aside class="book">
        <div class="head">
          <h2>螺纹2101(rb2101)</h2>
          <button type="button" aria-label="还原"><svg width="14" height="12" viewBox="0 0 14 12"><path d="M2 2.500h10" stroke="#7fbfff" stroke-width="2" /><rect x="2.500" y="2.500" width="9" height="7" fill="none" stroke="#7fbfff" /></svg></button>
        </div>
        <div class="ratio"><i></i></div>
        <table class="depth">
          <tbody><tr v-for="a in asks" :key="a[0]" :class="{ big: a[0] === '卖一' }"><th>{{ a[0] }}</th><td class="r">{{ a[1] }}</td><td class="y">{{ a[2] }}</td></tr></tbody>
        </table>
        <table class="depth">
          <tbody><tr v-for="b in bids" :key="b[0]" :class="{ big: b[0] === '买一' }"><th>{{ b[0] }}</th><td class="r">{{ b[1] }}</td><td class="y">{{ b[2] }}</td></tr></tbody>
        </table>
        <table class="quote">
          <tbody><tr v-for="q in quotes" :key="q[0]"><th>{{ q[0] }}</th><td :class="q[2]">{{ q[1] }}</td><th class="second">{{ q[3] }}</th><td class="end" :class="q[5]">{{ q[4] }}</td></tr></tbody>
        </table>
        <table class="ticks">
          <thead><tr><th>北京</th><th>价格</th><th>√大单</th><th>仓差</th><th>性质</th></tr></thead>
          <tbody>
            <tr v-for="(t, i) in ticks" :key="i">
              <td class="w" :class="{ sec: t[0][0] === ':' }">{{ t[0] }}</td><td class="r">{{ t[1] }}</td><td :class="t[5]">{{ t[2] }}</td><td class="y">{{ t[3] }}</td><td class="kind" :class="t[5]">{{ t[4] }}</td>
            </tr>
          </tbody>
        </table>
        <div class="foot"><button type="button">笔</button><span></span></div>
      </aside>

      <aside class="tipcol"><p>点击鼠标<br>在弹出的<br>指定窗口</p></aside>
    </div>
  </div>
</template>

<style>
body { margin: 0; background: #000; }
</style>

<style scoped>
* { box-sizing: border-box; }
.app { min-height: 100vh; display: flex; flex-direction: column; overflow: hidden; background: #000; color: #e6e6e6; font-family: "Liberation Sans", "Noto Sans CJK SC", sans-serif; }
button { margin: 0; padding: 0; border: 0; background: none; font: inherit; color: inherit; display: flex; align-items: center; justify-content: center; }
p, h1, h2, dl, dd { margin: 0; }
svg { display: block; }
table { width: 100%; border-collapse: collapse; table-layout: fixed; }
th, td { padding: 0; font-size: 14px; line-height: 20px; white-space: nowrap; }
th { font-weight: 400; text-align: left; font-family: "Noto Sans CJK SC", sans-serif; }
td { font-weight: 700; text-align: right; }
.r { color: #ff3c3c; }
.g { color: #00e600; }
.y { color: #ff0; }
.w { color: #f0f0f0; }

.menubar { position: relative; height: 25px; display: flex; align-items: center; background: linear-gradient(#dedede, #f4f4f4 35%, #c6c6c6); color: #111; font-family: "Noto Sans CJK SC", sans-serif; }
.menu { flex: 59 1 0; display: flex; gap: 24px; padding-left: 4px; font-size: 12px; }
.hotitem { color: #f00; }
h1 { font-size: 15px; font-weight: 400; color: #f4500a; }
.corner { flex: 41 1 0; display: flex; justify-content: flex-end; gap: 3px; padding-right: 18px; }
.corner button { width: 74px; height: 20px; gap: 8px; border: 1px solid #8c8c8c; border-radius: 3px; color: #e00000; font-size: 14px; background: linear-gradient(#fff, #d0d0d0); }
.brand { position: absolute; top: 9px; right: 4px; z-index: 2; display: flex; gap: 2px; color: #e0541c; }
.brand p { width: 68px; }
.brand b { display: block; font: 700 19px/16px "DejaVu Sans", "Noto Sans CJK SC", sans-serif; white-space: nowrap; }
.brand span { display: block; font: 14px/14px "DejaVu Sans", sans-serif; }

.toolbar { height: 24px; display: flex; align-items: center; padding-bottom: 2px; border-bottom: 2px solid #c8c4c4; background: #ebebeb; }
.toolbar button { position: relative; flex: none; width: 28px; height: 20px; }
.toolbar button:first-child { margin-left: -8px; }
.toolbar button svg { width: 16px; height: 16px; }
.toolbar .on { border: 1px solid #333; border-radius: 3px; background: #fff; }
.tile { width: 16px; height: 16px; border-radius: 2px; font: 12px/16px "Roboto", "Noto Sans CJK SC", sans-serif; color: #fff; text-align: center; }
.tile.narrow { font-size: 9px; }
.gold { background: linear-gradient(#e2b93a, #c98e00); }
.leaf { background: linear-gradient(#86bf78, #58994a); }
.hot { background: linear-gradient(#f58a4a, #ee4020); }
.f10 { width: 16px; height: 14px; border-radius: 2px; background: #ee7a2a; border-top: 2px solid #f5c26a; color: #fff; font: 700 8px/12px "Liberation Sans", sans-serif; text-align: center; }
.new { color: #2a8ae6; font: 12px "Noto Sans CJK SC", sans-serif; }
.toolbar .new { font-size: 12px; }
.new i { position: absolute; top: 1px; right: 3px; width: 6px; height: 6px; border-radius: 50%; background: #f00000; }
.sep { flex: none; width: 2px; height: 18px; margin: 0 3px; background: #999; }

.body { flex: 1; display: flex; }
.side { flex: none; width: 12px; border-right: 2px solid #c8c4c4; background: #ccc; overflow: hidden; }
.side button { position: relative; width: 10px; height: 82px; align-items: flex-start; justify-content: flex-start; padding-top: 12px; border-bottom: 1px solid #777; background: linear-gradient(30deg, #d2d2d2 0 5px, #888 5px 6px, #f3f3ee 6px); color: #444; font-family: "Noto Sans CJK SC", sans-serif; }
.side span { width: 12px; margin-left: -4px; font-size: 12px; line-height: 12px; word-break: break-all; flex: none; text-align: left; }
.side .cur { background: #777; color: #fff; padding-top: 6px; }
.side i { position: absolute; left: 0; bottom: 12px; font: 8px "DejaVu Sans", sans-serif; }

.center { flex: 1; min-width: 0; }
.caption { height: 19px; display: flex; align-items: center; border-bottom: 1px solid #c01008; font: 12px/18px "Noto Sans CJK SC", sans-serif; }
.name { flex: 1; padding-left: 2px; }
a { margin-right: 20px; color: #7fbfff; }
.boxes { display: flex; gap: 1px; }
.boxes button, .head button { width: 16px; height: 14px; border: 1px solid #7fbfff; }
.panel { position: relative; border-bottom: 1px solid #c01008; }
.panel svg, .dates svg { width: 100%; }
.crisp { shape-rendering: crispEdges; }
.dots { stroke: #a00000; stroke-dasharray: 1 1; }
.dots.bright { stroke: #ff2020; }
.edge { stroke: #c01008; }
.price { font: 700 13px "Liberation Sans", sans-serif; fill: #b8b8b8; }
.lit { fill: #e0e0e0; }
.level { font: 12px "Noto Sans", "Noto Sans CJK SC", sans-serif; fill: #c0c0c0; }
.unit { font: 12px "Noto Sans CJK SC", sans-serif; fill: #e0e0e0; }
.dates .date { font: 10px "Noto Sans", sans-serif; fill: #e0e0e0; }
.legend { position: absolute; top: 0; left: 63px; display: flex; gap: 5px; font: 12px/20px "Noto Sans", sans-serif; white-space: nowrap; }
.legend .wide { margin-right: 4px; }
.sub .legend { gap: 7px; }
.detail { position: absolute; top: 16px; left: 1px; width: 60px; height: 240px; border: 1px solid #e0e0e0; background: #000; font-size: 13px; line-height: 14px; }
.detail dt { display: flex; justify-content: space-between; padding: 0 10px; font: 12px/14px "Noto Sans CJK SC", sans-serif; }
.detail .date { padding: 0; display: block; text-align: center; font: 13px/14px "Liberation Sans", sans-serif; }
.detail dd { text-align: right; }

.book { flex: none; width: 241px; display: flex; flex-direction: column; border-left: 1px solid #c01008; }
.head { position: relative; height: 24px; display: flex; align-items: center; justify-content: center; }
h2 { padding-right: 14px; color: #ff0; font: 700 20px/24px "Liberation Serif", "Noto Sans CJK SC", serif; }
.head button { position: absolute; top: 1px; right: 1px; }
.ratio { height: 6px; border-top: 1px solid #c01008; border-bottom: 1px solid #c01008; background: #00e600; }
.ratio i { display: block; width: 24%; height: 4px; background: #ff3c3c; }
.depth { border-bottom: 1px solid #c01008; }
.depth th { width: 60px; padding-left: 5px; }
.depth td { width: 53px; }
.depth td.y { width: auto; padding-left: 14px; text-align: left; }
.depth .big td { font-size: 21px; line-height: 30px; }
.quote { border-bottom: 1px solid #c01008; }
.quote th { width: 40px; padding-left: 5px; }
.quote td { width: 73px; }
.quote .second { width: 50px; padding-left: 14px; }
.quote .end { width: auto; padding-right: 5px; }
.ticks th, .ticks td { line-height: 22px; text-align: right; }
.ticks th { color: #808080; width: 48px; }
.ticks th:first-child { width: 39px; text-align: left; padding-left: 5px; }
.ticks th:nth-child(2) { width: 69px; }
.ticks th:last-child { width: auto; }
.ticks .sec { font-weight: 400; font-size: 12px; }
.ticks .kind { font-weight: 400; font-family: "Noto Sans CJK SC", sans-serif; }
.foot { margin-top: auto; height: 16px; display: flex; }
.foot button { width: 37px; border: 1px solid #c01008; border-top: 0; border-left: 0; border-radius: 0 0 3px 3px; font: 12px/14px "Noto Sans CJK SC", sans-serif; }
.foot span { flex: 1; border-top: 1px solid #c01008; }

.tipcol { flex: none; width: 60px; padding: 10px 0 0 12px; border-left: 3px solid #c8c4c4; overflow: hidden; box-shadow: inset 2px 0 #707070; }
.tipcol p { width: 60px; height: 49px; padding: 4px 0 0 4px; border: 1px solid #f0f0f0; font: 12px/13px "Noto Sans CJK SC", sans-serif; white-space: nowrap; }
</style>
